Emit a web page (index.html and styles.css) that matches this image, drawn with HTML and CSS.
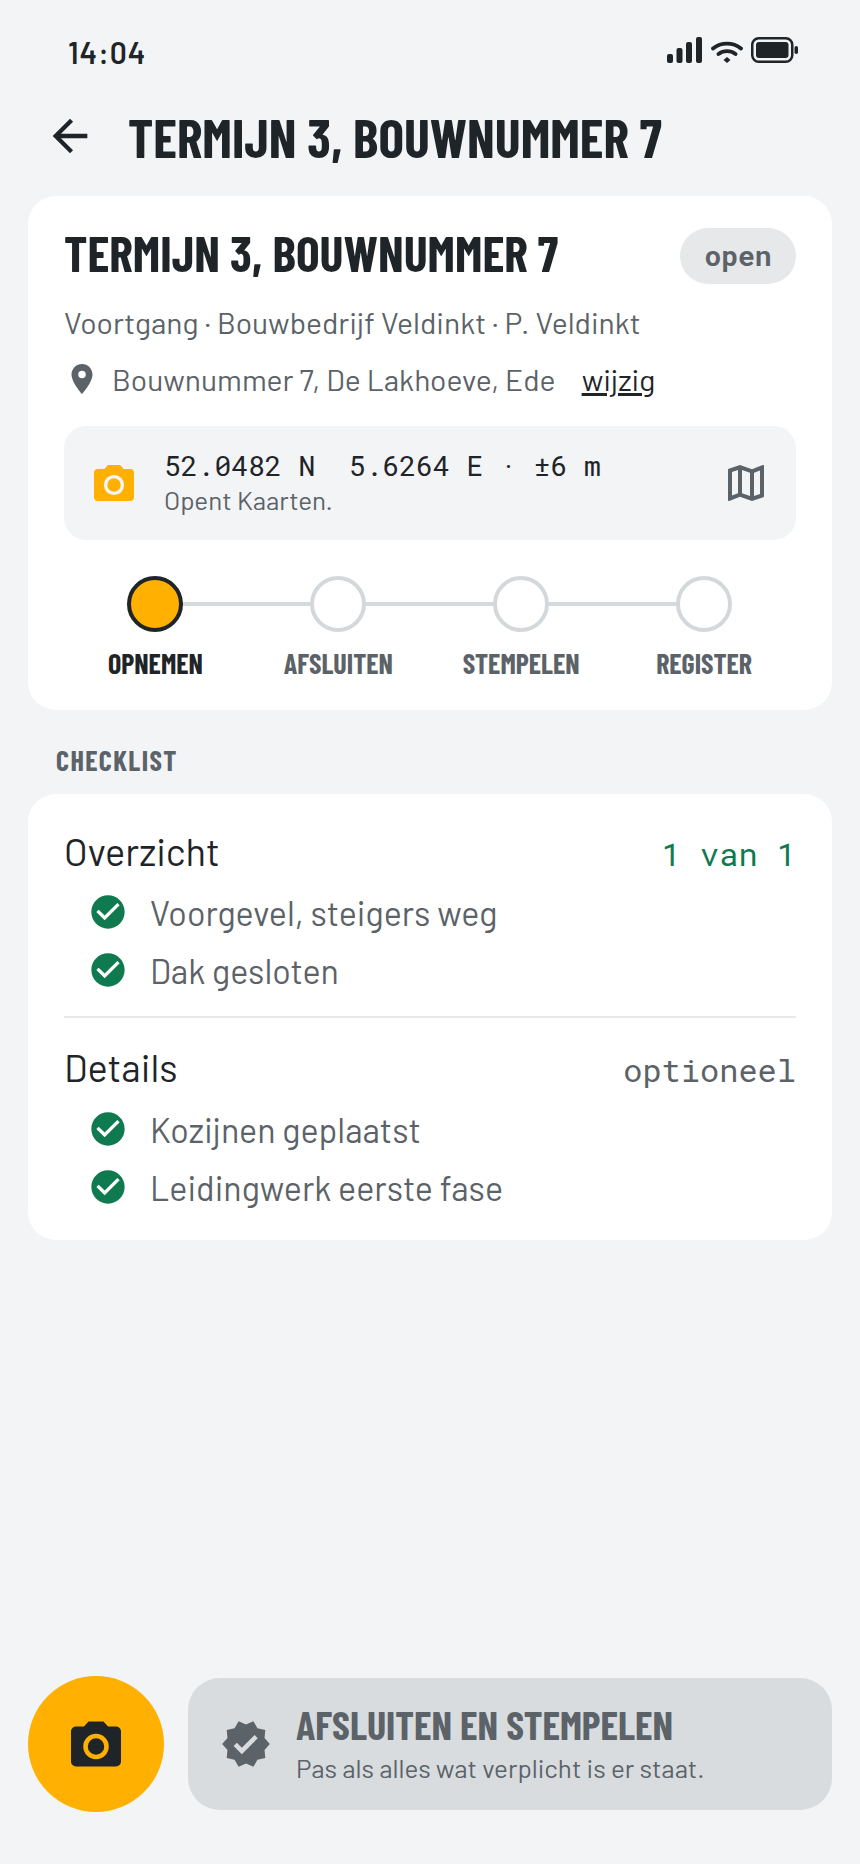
FILE: index.html
```html
<!DOCTYPE html>
<html lang="nl">
<head>
<meta charset="utf-8">
<title>Termijn</title>
<link rel="stylesheet" href="styles.css">
</head>
<body>
<div class="app">
  <div class="status">
    <span class="time">14:04</span>
    <div class="status-icons">
      <svg class="ic-signal" width="36" height="26" viewBox="0 0 36 26"><rect x="0" y="17" width="6" height="9" rx="2"/><rect x="9.500" y="11" width="6" height="15" rx="2"/><rect x="19" y="5" width="6" height="21" rx="2"/><rect x="29" y="0" width="6" height="26" rx="2"/></svg>
      <svg class="ic-wifi" width="32" height="22" viewBox="0 0 32 22"><path d="M2 7.500c8-6.500 20-6.500 28 0M7.500 13c5-3.800 12-3.800 17 0" fill="none" stroke="#1f2429" stroke-width="3.800" stroke-linecap="round"/><path d="M16 16l3.500 3-3.500 3-3.500-3z"/></svg>
      <svg class="ic-batt" width="47" height="26" viewBox="0 0 47 26"><rect x="1.250" y="1.250" width="40" height="23.500" rx="6.500" fill="none" stroke="#1f2429" stroke-width="2.500"/><rect x="5" y="5" width="32.500" height="16" rx="3"/><rect x="43.500" y="9" width="3.500" height="8" rx="1.750"/></svg>
    </div>
  </div>
  <header class="topbar">
    <svg class="back" width="52" height="52" viewBox="0 0 24 24"><path fill="#1f2429" d="M20 11H7.830l5.590-5.590L12 4l-8 8 8 8 1.410-1.410L7.830 13H20v-2z"/></svg>
    <h1 class="title">TERMIJN 3, BOUWNUMMER 7</h1>
  </header>
  <section class="card card-main">
    <div class="head">
      <h2 class="card-title">TERMIJN 3, BOUWNUMMER 7</h2>
      <span class="badge">open</span>
    </div>
    <p class="sub">Voortgang · Bouwbedrijf Veldinkt · P. Veldinkt</p>
    <div class="loc">
      <svg width="36" height="36" viewBox="0 0 24 24"><path fill="#5b6268" d="M12 2C8.130 2 5 5.130 5 9c0 5.250 7 13 7 13s7-7.750 7-13c0-3.870-3.130-7-7-7zm0 9.500a2.500 2.500 0 1 1 0-5 2.500 2.500 0 0 1 0 5z"/></svg>
      <span class="loc-text">Bouwnummer 7, De Lakhoeve, Ede</span>
      <a class="link">wijzig</a>
    </div>
    <div class="gps">
      <svg class="gps-cam" width="48" height="48" viewBox="0 0 24 24"><path fill="#ffb000" d="M9 3 7.170 5H4a2 2 0 0 0-2 2v12a2 2 0 0 0 2 2h16a2 2 0 0 0 2-2V7a2 2 0 0 0-2-2h-3.170L15 3z"/><circle cx="12" cy="13" r="4.200" fill="none" stroke="#f2f4f6" stroke-width="1.700"/></svg>
      <div class="gps-text">
        <div class="coords">52.0482 N  5.6264 E · ±6 m</div>
        <div class="gps-note">Opent Kaarten.</div>
      </div>
      <svg class="map" width="48" height="48" viewBox="0 0 24 24"><path fill="#5b6268" d="M20.500 3l-.16.03L15 5.100 9 3 3.360 4.900c-.21.07-.36.25-.36.48V20.500c0 .28.22.5.5.5l.16-.03L9 18.900l6 2.100 5.640-1.900c.21-.07.36-.25.36-.48V3.500c0-.28-.22-.5-.5-.5zM10 5.470l4 1.400v11.660l-4-1.400V5.470zm-5 .99l3-1.010v11.700l-3 1.160V6.460zm14 11.080l-3 1.010V6.860l3-1.160v11.840z"/></svg>
    </div>
    <ol class="steps">
      <li class="step active"><span class="dot"></span><span class="label">OPNEMEN</span></li>
      <li class="step"><span class="dot"></span><span class="label">AFSLUITEN</span></li>
      <li class="step"><span class="dot"></span><span class="label">STEMPELEN</span></li>
      <li class="step"><span class="dot"></span><span class="label">REGISTER</span></li>
    </ol>
  </section>
  <h3 class="section">CHECKLIST</h3>
  <section class="card card-list">
    <div class="group">
      <div class="group-head"><span class="group-name">Overzicht</span><span class="group-meta green">1 van 1</span></div>
      <div class="item"><svg width="40" height="40" viewBox="0 0 24 24"><path fill="#0f7a4f" d="M12 2C6.480 2 2 6.480 2 12s4.480 10 10 10 10-4.480 10-10S17.520 2 12 2zm-2 15l-5-5 1.410-1.410L10 14.170l7.590-7.590L19 8l-9 9z"/></svg><span>Voorgevel, steigers weg</span></div>
      <div class="item"><svg width="40" height="40" viewBox="0 0 24 24"><path fill="#0f7a4f" d="M12 2C6.480 2 2 6.480 2 12s4.480 10 10 10 10-4.480 10-10S17.520 2 12 2zm-2 15l-5-5 1.410-1.410L10 14.170l7.590-7.590L19 8l-9 9z"/></svg><span>Dak gesloten</span></div>
    </div>
    <div class="group group-second">
      <div class="group-head"><span class="group-name">Details</span><span class="group-meta">optioneel</span></div>
      <div class="item"><svg width="40" height="40" viewBox="0 0 24 24"><path fill="#0f7a4f" d="M12 2C6.480 2 2 6.480 2 12s4.480 10 10 10 10-4.480 10-10S17.520 2 12 2zm-2 15l-5-5 1.410-1.410L10 14.170l7.590-7.590L19 8l-9 9z"/></svg><span>Kozijnen geplaatst</span></div>
      <div class="item"><svg width="40" height="40" viewBox="0 0 24 24"><path fill="#0f7a4f" d="M12 2C6.480 2 2 6.480 2 12s4.480 10 10 10 10-4.480 10-10S17.520 2 12 2zm-2 15l-5-5 1.410-1.410L10 14.170l7.590-7.590L19 8l-9 9z"/></svg><span>Leidingwerk eerste fase</span></div>
    </div>
  </section>
  <div class="actions">
    <button class="fab"><svg width="60" height="60" viewBox="0 0 24 24"><path fill="#1f2429" d="M9 3 7.170 5H4a2 2 0 0 0-2 2v12a2 2 0 0 0 2 2h16a2 2 0 0 0 2-2V7a2 2 0 0 0-2-2h-3.170L15 3z"/><circle cx="12" cy="13" r="4.200" fill="none" stroke="#ffb000" stroke-width="1.800"/></svg></button>
    <button class="cta">
      <svg width="52" height="52" viewBox="0 0 24 24"><path fill="#5b6268" d="M23 12l-2.440-2.790.34-3.690-3.610-.82-1.890-3.200L12 2.960 8.600 1.500 6.710 4.690l-3.610.81.340 3.700L1 12l2.440 2.790-.34 3.700 3.610.82 1.890 3.190L12 21.040l3.400 1.460 1.890-3.190 3.610-.82-.34-3.690zm-12.910 4.720-3.800-3.810 1.480-1.480 2.320 2.330 5.850-5.870 1.480 1.480z"/></svg>
      <span class="cta-text"><span class="cta-title">AFSLUITEN EN STEMPELEN</span><span class="cta-note">Pas als alles wat verplicht is er staat.</span></span>
    </button>
  </div>
</div>
</body>
</html>
```
FILE: styles.css
```css
* { box-sizing: border-box; }
html, body { margin: 0; padding: 0; }
body { background: #f2f4f6; font-family: "Barlow", "Roboto", "Liberation Sans", sans-serif; color: #1f2429; }
.app { width: 860px; height: 1864px; display: flex; flex-direction: column; padding: 0 28px; position: relative; }
.status { height: 100px; display: flex; justify-content: space-between; align-items: center; padding: 4px 34px 0 40px; }
.time { font: 600 30px/1 "Barlow", "Roboto", sans-serif; letter-spacing: 1px; }
.status-icons { display: flex; gap: 8px; align-items: center; margin-top: -4px; }
.status-icons svg { fill: #1f2429; display: block; }
.ic-wifi { margin-top: 4px; }
.topbar { height: 72px; display: flex; align-items: center; gap: 32px; margin-left: 16px; }
.title { margin: 0; font: 700 54px/72px "Barlow Condensed", "Roboto Condensed", sans-serif; white-space: nowrap; padding-top: 2px; }
.card { background: #fff; border-radius: 28px; }
.card-main { margin-top: 24px; padding: 32px 36px 30px; }
.head { display: flex; justify-content: space-between; align-items: center; height: 56px; }
.card-title { margin: 0 0 8px; font: 700 50px/48px "Barlow Condensed", "Roboto Condensed", sans-serif; white-space: nowrap; }
.badge { background: #e6e8ea; color: #5b6268; border-radius: 28px; width: 116px; height: 56px; padding-bottom: 2px; display: flex; align-items: center; justify-content: center; font: 700 28px "Roboto Mono", "DejaVu Sans Mono", monospace; }
.sub { margin: 18px 0 0; font-size: 30px; line-height: 40px; color: #5b6268; }
.loc { display: flex; align-items: center; margin-top: 15px; height: 44px; font-size: 30px; color: #5b6268; }
.loc-text { margin-left: 12px; }
.link { margin-left: 26px; color: #1f2429; text-decoration: underline; }
.gps { margin-top: 25px; height: 114px; background: #f2f4f6; border-radius: 22px; display: flex; align-items: center; padding: 0 26px; }
.gps-text { flex: 1; margin: 0 0 3px 26px; }
.coords { font: 400 28px/37px "Roboto Mono", "Liberation Mono", monospace; white-space: pre; }
.gps-note { font-size: 26px; line-height: 32px; color: #5b6268; }
.steps { list-style: none; margin: 36px 0 0; padding: 0 0.5px 0 0; display: grid; grid-template-columns: repeat(4, 1fr); }
.step { display: flex; flex-direction: column; align-items: center; gap: 14px; position: relative; }
.step + .step::before { content: ""; position: absolute; height: 4px; background: #d5dadc; top: 26px; right: 50%; width: 100%; }
.dot { width: 56px; height: 56px; border-radius: 50%; background: #fff; border: 4px solid #d5d8da; position: relative; z-index: 1; }
.active .dot { background: #ffb000; border-color: #1f2429; }
.label { font: 700 28px/34px "Barlow Condensed", "Roboto Condensed", sans-serif; color: #5b6268; }
.active .label { color: #1f2429; }
.section { margin: 32px 0 16px 28px; font: 700 28px/36px "Barlow Condensed", "Roboto Condensed", sans-serif; letter-spacing: 1.4px; color: #5b6268; }
.card-list { padding: 32px 36px 24px; }
.group-head { display: flex; justify-content: space-between; align-items: center; height: 50px; margin-bottom: 7px; }
.group-name { font-size: 38px; }
.group-meta { font: 400 32px "Roboto Mono", "Liberation Mono", monospace; color: #5b6268; padding-top: 4px; }
.green { color: #0f7a4f; }
.item { display: flex; align-items: center; gap: 22px; font-size: 34px; color: #5b6268; margin-left: 24px; height: 58px; }
.group-second { border-top: 2px solid #e6e8ea; margin-top: 17px; padding-top: 24px; }
.group-second .group-head { margin-bottom: 8px; }
.actions { position: absolute; left: 28px; right: 28px; bottom: 52px; display: flex; gap: 24px; align-items: center; }
.fab { width: 136px; height: 136px; border-radius: 50%; background: #ffb000; border: 0; display: flex; align-items: center; justify-content: center; padding: 0; }
.cta { flex: 1; height: 132px; border: 0; border-radius: 32px; background: #d8dcdf; display: flex; align-items: center; gap: 24px; padding: 0 32px; text-align: left; font-family: inherit; }
.cta-text { display: flex; flex-direction: column; padding-bottom: 2px; }
.cta-title { font: 700 40px/44px "Barlow Condensed", "Roboto Condensed", sans-serif; color: #5b6268; margin-bottom: 6px; }
.cta-note { font-size: 26px; line-height: 32px; color: #5b6268; }
```
